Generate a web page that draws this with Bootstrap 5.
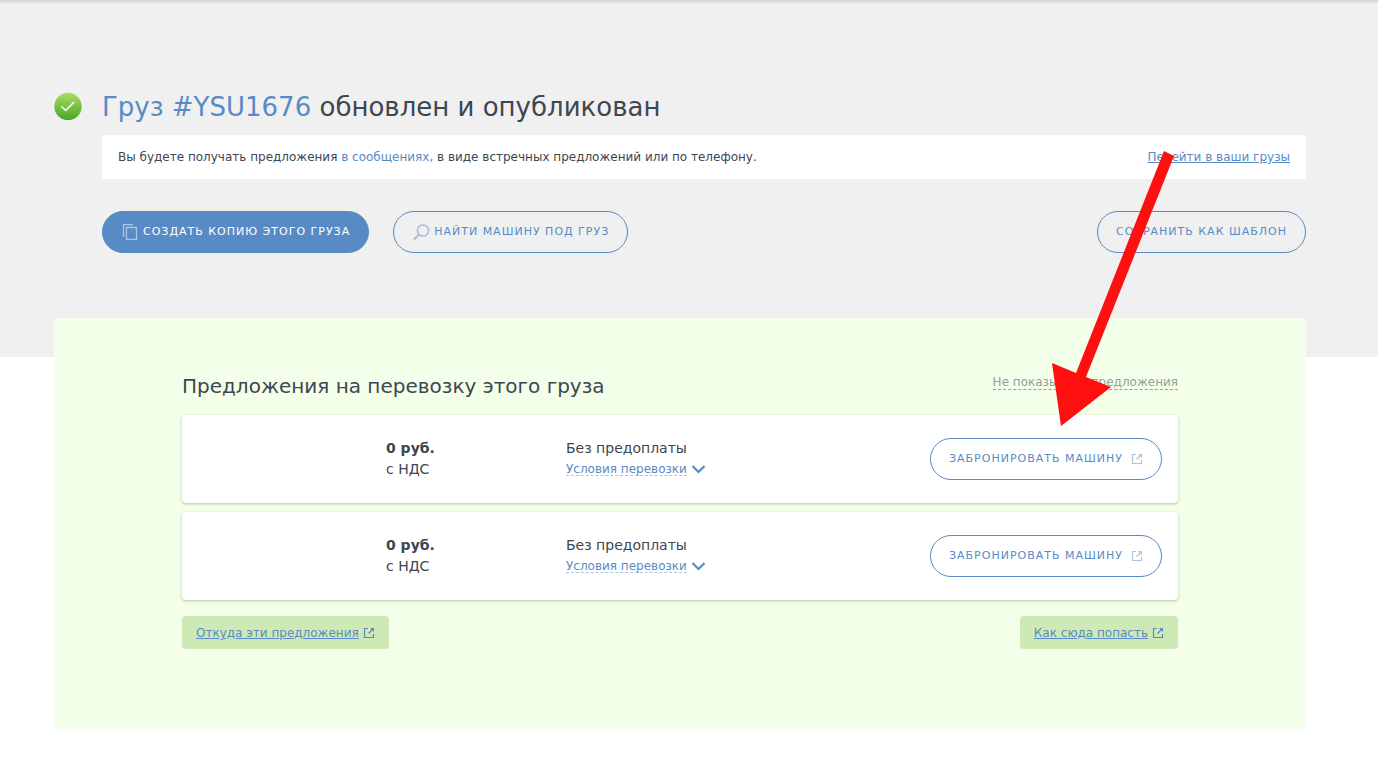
<!DOCTYPE html>
<html lang="ru">
<head>
<meta charset="utf-8">
<meta name="viewport" content="width=device-width, initial-scale=1">
<title>Груз #YSU1676 обновлен и опубликован</title>
<link href="https://cdn.jsdelivr.net/npm/bootstrap@5.3.0/dist/css/bootstrap.min.css" rel="stylesheet">
<style>
  :root { --blue: #588bc5; --ink: #3e4651; }
  body { font-family: Verdana, "DejaVu Sans", sans-serif; font-size: 12px; line-height: 16px; color: var(--ink); }
  a { color: var(--blue); }
  .page-gutter { padding-left: 54px; padding-right: 72px; }
  .hero { background: #f0f0f0 linear-gradient(#ccd3d8, #f0f0f0) no-repeat top / 100% 4px; padding-top: 88px; padding-bottom: 104px; }
  .hero-title { font-size: 26px; line-height: 38px; font-weight: 400; }
  .status-icon { width: 28px; height: 28px; margin-top: 4px; }
  .hero-body { padding-left: 20px; }
  .notice { border-radius: 4px; padding: 14px 16px; margin-top: 9px; margin-bottom: 32px; }
  .btn-pill { --bs-btn-font-size: 11px; --bs-btn-line-height: 16px; --bs-btn-padding-x: 18px; --bs-btn-padding-y: 12px;
    --bs-btn-border-radius: 21px; --bs-btn-color: var(--blue); --bs-btn-border-color: var(--blue);
    --bs-btn-hover-color: #fff; --bs-btn-hover-bg: var(--blue); --bs-btn-hover-border-color: var(--blue);
    letter-spacing: 1px; text-transform: uppercase; }
  .btn-pill-solid { --bs-btn-color: #fff; --bs-btn-bg: var(--blue); }
  .faded { opacity: .5; }
  .offers { background: #f3ffe8; border-radius: 4px; margin-top: -39px; padding: 48px 128px 80px; }
  .offers-title { font-size: 20px; line-height: 41px; font-weight: 400; }
  .hide-link { color: #97a09b; text-decoration: none; border-bottom: 1px dashed #97a09b; line-height: 12px; }
  .offer { border: 0; border-radius: 4px; padding: 0 16px; min-height: 88px; box-shadow: 0 1px 3px rgba(40, 60, 30, .3); }
  .offer + .offer { margin-top: 9px; }
  .offer-text { font-size: 14px; line-height: 21px; }
  .col-carrier { width: 188px; }
  .col-price { width: 180px; }
  .terms { border: 0; background: none; color: var(--blue); font-size: 12px; height: 21px; }
  .terms-label { border-bottom: 1px dashed #a9c4e3; line-height: 12px; }
  .hint { background: #cfe9b6; border-radius: 4px; padding: 9px 14px 8px; }
  .hint svg { color: var(--blue); }
  .pointer { right: 204px; top: 151px; pointer-events: none; }
</style>
</head>
<body>
<svg class="d-none" aria-hidden="true">
  <symbol id="external" viewBox="0 0 12 12">
    <path d="M5 1.500H1.500V10.500H10.500V7M9.500 2.500L5.500 6.500" fill="none" stroke="currentColor" stroke-width="1.200"/>
    <path d="M7 1H11V5Z" fill="currentColor"/>
  </symbol>
</svg>
<div class="position-relative">
  <header class="hero page-gutter">
    <div class="d-flex">
      <svg class="status-icon flex-shrink-0" viewBox="0 0 28 28" aria-hidden="true">
        <defs><linearGradient id="ok" x1="0" y1="0" x2="0" y2="1"><stop stop-color="#acdc60"/><stop offset="1" stop-color="#46a829"/></linearGradient></defs>
        <circle cx="14" cy="14.500" r="13.700" fill="url(#ok)"/>
        <path d="M7.500 14.500L11.700 18.500L20 10" fill="none" stroke="#fff" stroke-width="1.500"/>
      </svg>
      <main class="hero-body flex-grow-1">
        <h1 class="hero-title mb-0"><a href="#" class="text-decoration-none">Груз #YSU1676</a> обновлен и опубликован</h1>
        <div class="notice bg-white d-flex flex-wrap justify-content-between">
          <span>Вы будете получать предложения <a href="#" class="text-decoration-none">в сообщениях,</a> в виде встречных предложений или по телефону.</span>
          <a href="#">Перейти в ваши грузы</a>
        </div>
        <div class="d-flex flex-wrap gap-4">
          <button type="button" class="btn btn-pill btn-pill-solid d-flex align-items-center">
            <svg class="faded me-1" width="18" height="16" viewBox="0 0 18 16" aria-hidden="true"><path d="M2.500 13V.7H12M5.500 3.500H15.500V15.300H5.500Z" fill="none" stroke="currentColor" stroke-width="1.300"/></svg>
            Создать копию этого груза
          </button>
          <button type="button" class="btn btn-pill d-flex align-items-center">
            <svg class="faded me-1" width="18" height="16" viewBox="0 0 18 16" aria-hidden="true"><circle cx="11" cy="6.500" r="5.600" fill="none" stroke="currentColor" stroke-width="1.500"/><path d="M7 10.500L1.800 15.700" stroke="currentColor" stroke-width="2"/></svg>
            Найти машину под груз
          </button>
          <button type="button" class="btn btn-pill ms-auto">Сохранить как шаблон</button>
        </div>
      </main>
    </div>
  </header>

  <div class="page-gutter">
    <section class="offers position-relative">
      <div class="d-flex flex-wrap justify-content-between mb-2">
        <h2 class="offers-title mb-0">Предложения на перевозку этого груза</h2>
        <div class="pt-2"><a href="#" class="hide-link">Не показывать предложения</a></div>
      </div>
      <article class="card offer flex-row align-items-center">
        <div class="col-carrier"></div>
        <div class="col-price offer-text"><b>0 руб.</b><br>с НДС</div>
        <div class="offer-text flex-grow-1">Без предоплаты
          <button type="button" class="terms d-flex align-items-center p-0"><span class="terms-label">Условия перевозки</span>
            <svg class="ms-1" width="15" height="9" viewBox="0 0 15 9" aria-hidden="true"><path d="M1.500 1L7.500 7L13.500 1" fill="none" stroke="currentColor" stroke-width="2.200"/></svg></button>
        </div>
        <button type="button" class="btn btn-pill d-flex align-items-center">Забронировать машину
          <svg class="faded ms-2" width="12" height="12" aria-hidden="true"><use href="#external"/></svg></button>
      </article>
      <article class="card offer flex-row align-items-center mb-3">
        <div class="col-carrier"></div>
        <div class="col-price offer-text"><b>0 руб.</b><br>с НДС</div>
        <div class="offer-text flex-grow-1">Без предоплаты
          <button type="button" class="terms d-flex align-items-center p-0"><span class="terms-label">Условия перевозки</span>
            <svg class="ms-1" width="15" height="9" viewBox="0 0 15 9" aria-hidden="true"><path d="M1.500 1L7.500 7L13.500 1" fill="none" stroke="currentColor" stroke-width="2.200"/></svg></button>
        </div>
        <button type="button" class="btn btn-pill d-flex align-items-center">Забронировать машину
          <svg class="faded ms-2" width="12" height="12" aria-hidden="true"><use href="#external"/></svg></button>
      </article>
      <div class="d-flex flex-wrap justify-content-between gap-2">
        <div class="hint d-flex align-items-center"><a href="#">Откуда эти предложения</a><svg class="ms-1" width="12" height="12" aria-hidden="true"><use href="#external"/></svg></div>
        <div class="hint d-flex align-items-center"><a href="#">Как сюда попасть</a><svg class="ms-1" width="12" height="12" aria-hidden="true"><use href="#external"/></svg></div>
      </div>
    </section>
  </div>

  <svg class="pointer position-absolute" width="122" height="275" viewBox="0 0 122 275" aria-hidden="true">
    <path d="M112 0L122 5L34 226L59 236L9 275L0 212L24 222Z" fill="#ff0f0f"/>
  </svg>
</div>
<script src="https://cdn.jsdelivr.net/npm/bootstrap@5.3.0/dist/js/bootstrap.bundle.min.js"></script>
</body>
</html>
